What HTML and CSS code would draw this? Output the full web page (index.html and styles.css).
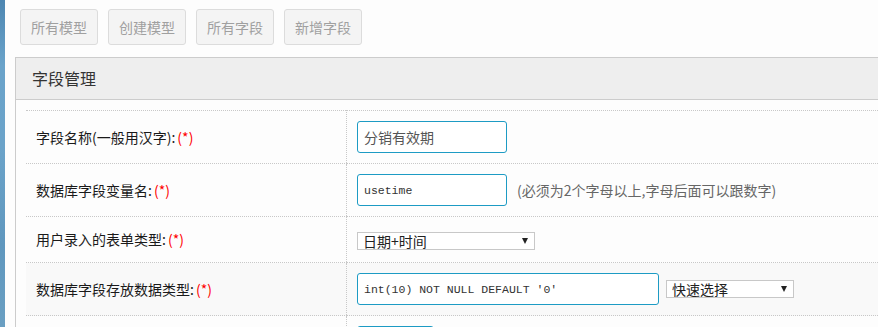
FILE: index.html
```html
<!DOCTYPE html>
<html lang="zh-CN">
<head>
<meta charset="utf-8">
<title>字段管理</title>
<link rel="stylesheet" href="styles.css">
</head>
<body>
<div class="strip"></div>
<div class="main">
  <div class="toolbar">
    <a class="btn">所有模型</a>
    <a class="btn">创建模型</a>
    <a class="btn">所有字段</a>
    <a class="btn">新增字段</a>
  </div>
  <div class="panel">
    <div class="panel-head">字段管理</div>
    <div class="panel-body">
      <table class="form-table">
        <tr>
          <td class="label">字段名称(一般用汉字):<span class="req">(*)</span></td>
          <td class="field"><input class="inp w150" type="text" value="分销有效期"></td>
        </tr>
        <tr>
          <td class="label">数据库字段变量名:<span class="req">(*)</span></td>
          <td class="field"><input class="inp w150 mono" type="text" value="usetime"><span class="hint">(必须为2个字母以上,字母后面可以跟数字)</span></td>
        </tr>
        <tr>
          <td class="label">用户录入的表单类型:<span class="req">(*)</span></td>
          <td class="field"><span class="sel w178"><select><option>日期+时间</option></select><i class="arrow"></i></span></td>
        </tr>
        <tr class="alt">
          <td class="label">数据库字段存放数据类型:<span class="req">(*)</span></td>
          <td class="field"><input class="inp w302 mono" type="text" value="int(10) NOT NULL DEFAULT '0'"><span class="sel w128 ml7"><select><option>快速选择</option></select><i class="arrow"></i></span></td>
        </tr>
        <tr>
          <td class="label"></td>
          <td class="field"><input class="inp w77" type="text" value=""></td>
        </tr>
      </table>
    </div>
  </div>
</div>
</body>
</html>
```

FILE: styles.css
```css
html, body {
  margin: 0;
  padding: 0;
  height: 100%;
  overflow: hidden;
}
body {
  display: flex;
  background: #fdfdfd;
  font-family: "Noto Sans CJK SC", "Liberation Sans", sans-serif;
  font-size: 14px;
  color: #222;
}
.strip {
  width: 5px;
  flex: 0 0 5px;
  background: linear-gradient(180deg, #4d86b1 0%, #6aa3ca 20%, #6ba3c9 45%, #5f97be 75%, #6a9fc2 100%);
}
.main {
  flex: 1;
  min-width: 0;
  padding: 9px 0 0 10px;
  overflow: hidden;
}
.toolbar {
  display: flex;
  gap: 10px;
  margin-left: 5px;
}
.btn {
  display: block;
  height: 36px;
  box-sizing: border-box;
  padding: 0 10px;
  line-height: 34px;
  border: 1px solid #dcdcdc;
  border-radius: 3px;
  background: #f4f4f4;
  color: #a0a0a0;
  font-size: 14px;
}
.panel {
  margin-top: 12px;
  width: 1000px;
  border: 1px solid #ccc;
  background: #fdfdfd;
}
.panel-head {
  height: 41px;
  line-height: 41px;
  padding-left: 16px;
  background: #eee;
  border-bottom: 1px solid #ccc;
  font-size: 16px;
  color: #333;
}
.panel-body {
  padding: 10px 10px 0 10px;
}
.form-table {
  width: 100%;
  border-collapse: collapse;
  border-top: 1px dotted #c8c8c8;
}
.form-table td {
  padding: 10px 10px;
  border-bottom: 1px dotted #c8c8c8;
  vertical-align: middle;
  line-height: 25px;
}
.form-table td.label {
  width: 300px;
  color: #1a1a1a;
}
.form-table td.field {
  border-left: 1px dotted #c8c8c8;
  white-space: nowrap;
}
.form-table tr.alt td {
  background: #f9f9f9;
}
.req {
  color: #f00;
  margin-left: 2px;
}
.inp {
  box-sizing: border-box;
  height: 32px;
  border: 1px solid #1d9bc4;
  border-radius: 3px;
  padding: 0 6px;
  font-family: "Noto Sans CJK SC", "Liberation Sans", sans-serif;
  font-size: 14px;
  color: #555;
  background: #fff;
  vertical-align: middle;
  outline: none;
}
.inp.mono {
  font-family: "Liberation Mono", "DejaVu Sans Mono", monospace;
  font-size: 11.5px;
  color: #333;
}
.w150 { width: 150px; }
.w302 { width: 302px; }
.w77 { width: 77px; }
.hint {
  margin-left: 10px;
  color: #666;
  vertical-align: middle;
}
.sel {
  position: relative;
  display: inline-block;
  vertical-align: middle;
  height: 18px;
}
.sel select {
  appearance: none;
  -webkit-appearance: none;
  box-sizing: border-box;
  width: 100%;
  height: 18px;
  margin: 0;
  padding: 0 0 0 5px;
  border: 1px solid #c8c8c8;
  border-radius: 0;
  background: #fff;
  font-family: "Noto Sans CJK SC", "Liberation Sans", sans-serif;
  font-size: 14px;
  line-height: 16px;
  color: #222;
  display: block;
}
.sel .arrow {
  position: absolute;
  right: 7px;
  top: 6px;
  width: 0;
  height: 0;
  border-left: 3.5px solid transparent;
  border-right: 3.5px solid transparent;
  border-top: 6px solid #222;
  pointer-events: none;
}
.w178 { width: 178px; }
.w128 { width: 128px; }
.ml7 { margin-left: 7px; }
```
